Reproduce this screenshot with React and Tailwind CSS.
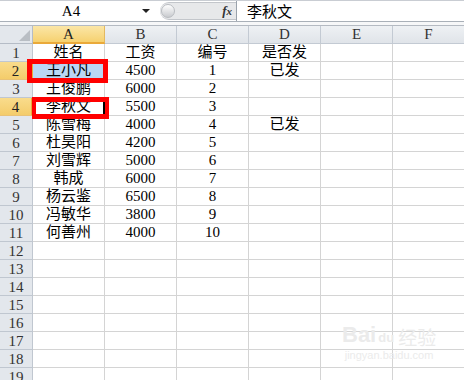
import React from "react";

const FONT = { fontFamily: '"Liberation Serif","Noto Sans CJK SC",serif' };
const CJK = { fontFamily: '"Noto Sans CJK SC","Liberation Sans",sans-serif' };

const data = [
  ["姓名", "工资", "编号", "是否发"],
  ["王小凡", "4500", "1", "已发"],
  ["王俊鹏", "6000", "2", ""],
  ["李秋文", "5500", "3", ""],
  ["陈雪梅", "4000", "4", "已发"],
  ["杜昊阳", "4200", "5", ""],
  ["刘雪辉", "5000", "6", ""],
  ["韩成", "6000", "7", ""],
  ["杨云鉴", "6500", "8", ""],
  ["冯敏华", "3800", "9", ""],
  ["何善州", "4000", "10", ""],
];

const cols = ["A", "B", "C", "D", "E", "F"];

function FormulaBar() {
  return (
    <div className="h-[26px] flex flex-col bg-[#f4f5f6]">
      <div className="h-px bg-[#c9cdd3]" />
      <div className="h-[20px] flex">
        <div className="w-[160px] bg-white flex items-center">
          <div className="w-[142px] text-center text-[15px] leading-[20px] text-black" style={FONT}>A4</div>
          <div className="w-0 h-0 border-l-[4px] border-r-[4px] border-t-[4px] border-l-transparent border-r-transparent border-t-[#222]" />
        </div>
        <div className="w-[76px] bg-white flex items-center">
          <div className="h-[18px] flex-1 flex items-center bg-[#e7e8ea] border-y border-[#c3c6cb] rounded-l-full relative">
            <div className="absolute left-[1px] top-[1px] w-[14px] h-[14px] rounded-full bg-gradient-to-b from-[#ffffff] to-[#c9cbcf] border border-[#b9bcc1]" />
            <div className="ml-auto mr-[4px] italic text-[13px] leading-[16px] text-[#333] font-bold" style={FONT}>f<span className="text-[11px]">x</span></div>
          </div>
        </div>
        <div className="w-px bg-[#9aa2ac]" />
        <div className="flex-1 bg-white pl-[10px] text-[15px] leading-[20px] text-black" style={CJK}>李秋文</div>
      </div>
      <div className="h-px bg-[#a9b0b8]" />
      <div className="h-[3px] bg-[#f6f7f8]" />
      <div className="h-px bg-[#b4bac2]" />
    </div>
  );
}

function HeaderRow() {
  return (
    <div className="flex h-[18px]">
      <div className="w-[33px] shrink-0 bg-[#e3e7ec] border-r border-b border-[#b5bcc6] relative">
        <svg className="absolute right-[2px] bottom-[2px]" width="11" height="11" viewBox="0 0 11 11">
          <polygon points="11,0 11,11 0,11" fill="#b9bec4" />
        </svg>
      </div>
      {cols.map((c) => (
        <div
          key={c}
          className={
            c === "A"
              ? "w-[72px] shrink-0 bg-gradient-to-b from-[#fbe6a6] to-[#f6d16f] border-r border-b-2 border-r-[#e3b960] border-b-[#eaa93a] text-center text-[15px] leading-[17px] text-[#222]"
              : "w-[72px] shrink-0 bg-gradient-to-b from-[#eef1f4] to-[#e0e4e9] border-r border-b border-[#c3cad3] text-center text-[15px] leading-[17px] text-[#333]"
          }
          style={FONT}
        >
          {c}
        </div>
      ))}
    </div>
  );
}

function Row({ n }) {
  const vals = data[n - 1] || ["", "", "", ""];
  const hl = n === 2 || n === 4;
  return (
    <div className="flex h-[18px]">
      <div
        className={
          hl
            ? "w-[33px] shrink-0 bg-gradient-to-b from-[#f9dc8c] to-[#f4cc6a] border-r-2 border-b border-r-[#e8a93d] border-b-[#e9c276] text-center text-[15px] leading-[18px] text-[#222]"
            : "w-[33px] shrink-0 bg-[#e3e7ec] border-r border-b border-[#c0c7d0] text-center text-[15px] leading-[18px] text-[#333]"
        }
        style={FONT}
      >
        {n}
      </div>
      {cols.map((c, i) => {
        const v = i < 4 ? vals[i] : "";
        const sel = n === 2 && i === 0;
        const active = n === 4 && i === 0;
        return (
          <div
            key={c}
            className={
              "w-[72px] shrink-0 border-r border-b border-[#d4d4d4] text-center text-[15px] leading-[17px] text-black relative " +
              (sel ? "bg-[#bad6f4]" : "bg-white")
            }
            style={FONT}
          >
            {v}
            {active && <div className="absolute -left-px -top-px w-[73px] h-[19px] border-2 border-black" />}
          </div>
        );
      })}
    </div>
  );
}

export default function App() {
  const rows = Array.from({ length: 19 }, (_, i) => i + 1);
  return (
    <div className="w-[464px] h-[380px] overflow-hidden bg-white relative">
      <FormulaBar />
      <div className="flex flex-col">
        <HeaderRow />
        {rows.map((n) => (
          <Row key={n} n={n} />
        ))}
      </div>
      <div className="absolute left-[27px] top-[59px] w-[81px] h-[24px] border-[5px] border-[#ff0000]" />
      <div className="absolute left-[32px] top-[97px] w-[77px] h-[22px] border-[5px] border-l-[4px] border-r-[4px] border-[#ff0000]" />
      <div className="absolute left-[342px] top-[324px] flex flex-col items-center text-[#ebebeb] select-none">
        <div className="flex items-end leading-none">
          <span className="text-[22px] font-bold" style={{ fontFamily: '"Liberation Sans",sans-serif' }}>Bai</span>
          <span className="text-[13px] font-bold mx-[2px] mb-[2px]" style={{ fontFamily: '"Liberation Sans",sans-serif' }}>du</span>
          <span className="text-[19px] ml-[2px]" style={CJK}>经验</span>
        </div>
        <div className="text-[11px] leading-[14px] mt-[2px]" style={{ fontFamily: '"Liberation Sans",sans-serif' }}>jingyan.baidu.com</div>
      </div>
    </div>
  );
}
